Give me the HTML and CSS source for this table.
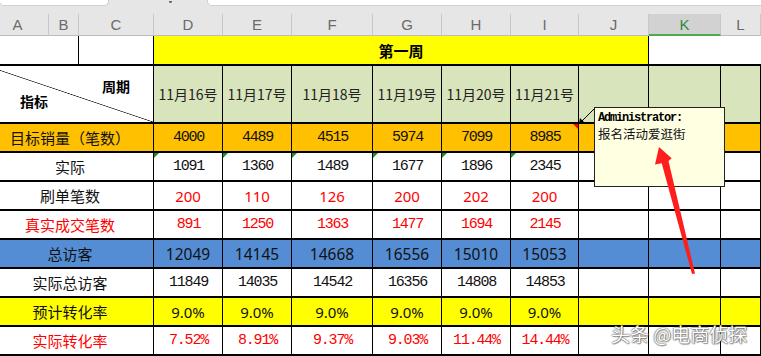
FILE: index.html
```html
<!DOCTYPE html>
<html lang="zh-CN">
<head>
<meta charset="utf-8">
<title>第一周</title>
<link rel="stylesheet" href="styles.css">
</head>
<body>
<div class="topbar">
  <div class="tb-box tb-left"></div>
  <span class="tb-mark"></span>
  <div class="tb-box tb-right"></div>
</div>
<div class="sheet">
  <div class="hd">A</div><div class="hd">B</div><div class="hd">C</div><div class="hd">D</div><div class="hd">E</div><div class="hd">F</div><div class="hd">G</div><div class="hd">H</div><div class="hd">I</div><div class="hd">J</div><div class="hd hd-sel">K</div><div class="hd">L</div>

  <div class="cell white span2"></div>
  <div class="cell white"></div>
  <div class="cell yellow span7 week">第一周</div>
  <div class="cell white span2 noright"></div>

  <div class="cell diag span3"><span class="d-top">周期</span><span class="d-bot">指标</span></div>
  <div class="cell green date">11月16号</div>
  <div class="cell green date">11月17号</div>
  <div class="cell green date">11月18号</div>
  <div class="cell green date">11月19号</div>
  <div class="cell green date">11月20号</div>
  <div class="cell green date">11月21号</div>
  <div class="cell green"></div><div class="cell green"></div><div class="cell green"></div>

  <div class="cell orange span3 label">目标销量（笔数）</div>
  <div class="cell orange mono">4000</div>
  <div class="cell orange mono">4489</div>
  <div class="cell orange mono">4515</div>
  <div class="cell orange mono">5974</div>
  <div class="cell orange mono">7099</div>
  <div class="cell orange mono has-note">8985</div>
  <div class="cell orange"></div><div class="cell orange"></div><div class="cell orange"></div>

  <div class="cell white span3 label">实际</div>
  <div class="cell white mono flag">1091</div>
  <div class="cell white mono flag">1360</div>
  <div class="cell white mono flag">1489</div>
  <div class="cell white mono flag">1677</div>
  <div class="cell white mono flag">1896</div>
  <div class="cell white mono flag">2345</div>
  <div class="cell white"></div><div class="cell white"></div><div class="cell white"></div>

  <div class="cell white span3 label">刷单笔数</div>
  <div class="cell white sans red">200</div>
  <div class="cell white sans red">110</div>
  <div class="cell white sans red">126</div>
  <div class="cell white sans red">200</div>
  <div class="cell white sans red">202</div>
  <div class="cell white sans red">200</div>
  <div class="cell white"></div><div class="cell white"></div><div class="cell white"></div>

  <div class="cell white span3 label red">真实成交笔数</div>
  <div class="cell white mono red">891</div>
  <div class="cell white mono red">1250</div>
  <div class="cell white mono red">1363</div>
  <div class="cell white mono red">1477</div>
  <div class="cell white mono red">1694</div>
  <div class="cell white mono red">2145</div>
  <div class="cell white"></div><div class="cell white"></div><div class="cell white"></div>

  <div class="cell blue span3 label">总访客</div>
  <div class="cell blue sans big">12049</div>
  <div class="cell blue sans big">14145</div>
  <div class="cell blue sans big">14668</div>
  <div class="cell blue sans big">16556</div>
  <div class="cell blue sans big">15010</div>
  <div class="cell blue sans big">15053</div>
  <div class="cell blue"></div><div class="cell blue"></div><div class="cell blue"></div>

  <div class="cell white span3 label">实际总访客</div>
  <div class="cell white mono">11849</div>
  <div class="cell white mono">14035</div>
  <div class="cell white mono">14542</div>
  <div class="cell white mono">16356</div>
  <div class="cell white mono">14808</div>
  <div class="cell white mono">14853</div>
  <div class="cell white"></div><div class="cell white"></div><div class="cell white"></div>

  <div class="cell yellow span3 label">预计转化率</div>
  <div class="cell yellow sans">9.0%</div>
  <div class="cell yellow sans">9.0%</div>
  <div class="cell yellow sans">9.0%</div>
  <div class="cell yellow sans">9.0%</div>
  <div class="cell yellow sans">9.0%</div>
  <div class="cell yellow sans">9.0%</div>
  <div class="cell yellow"></div><div class="cell yellow"></div><div class="cell yellow"></div>

  <div class="cell white span3 label red">实际转化率</div>
  <div class="cell white mono red">7.52%</div>
  <div class="cell white mono red">8.91%</div>
  <div class="cell white mono red">9.37%</div>
  <div class="cell white mono red">9.03%</div>
  <div class="cell white mono red">11.44%</div>
  <div class="cell white mono red">14.44%</div>
  <div class="cell white"></div><div class="cell white"></div><div class="cell white"></div>
</div>

<svg class="connector" width="22" height="22" viewBox="0 0 22 22">
  <line x1="6" y1="17" x2="20" y2="3" stroke="#000" stroke-width="1"/>
  <polygon points="4,19 5,13 10,18" fill="#000"/>
</svg>
<div class="comment">
  <div class="c-author">Administrator:</div>
  <div class="c-text">报名活动爱逛街</div>
</div>
<svg class="red-arrow" width="60" height="140" viewBox="0 0 60 140">
  <polygon points="19,7 31.7,18.3 28.5,21 55,133.5 52,134 21.7,23.3 15,24.5" fill="#ff1e1e"/>
</svg>
<div class="watermark">头条 @电商侦探</div>
</body>
</html>
```
FILE: styles.css
```css
html, body {
  margin: 0;
  padding: 0;
}
body {
  width: 761px;
  height: 356px;
  overflow: hidden;
  position: relative;
  background: #fff;
  font-family: "Noto Sans CJK SC", "Noto Sans", sans-serif;
}
.topbar {
  height: 14px;
  background: #e6e6e6;
  display: flex;
  align-items: flex-start;
  position: relative;
}
.tb-box {
  height: 6px;
  background: #fff;
  border: 1px solid #cfcfcf;
  border-top: none;
  border-radius: 0 0 5px 5px;
  box-sizing: border-box;
}
.tb-left {
  width: 110px;
  margin-left: -1px;
}
.tb-right {
  flex: 1;
  margin-left: 35px;
  margin-right: -6px;
}
.tb-mark {
  width: 3px;
  height: 2px;
  margin-left: 60px;
  margin-top: 1px;
  border-radius: 0 0 2px 2px;
  background: #666;
}
.sheet {
  margin-left: -13px;
  width: 774px;
  display: grid;
  grid-template-columns: 62px 30px 75px 69px 69px 81px 69px 69px 68px 70px 72px 40px;
  grid-template-rows: 22px 30px 58px repeat(8, 29px);
}
.hd {
  background: #e6e6e6;
  border-right: 1px solid #c8c8c8;
  border-bottom: 1px solid #bdbdbd;
  box-sizing: border-box;
  display: flex;
  align-items: center;
  justify-content: center;
  font: 15px "Liberation Sans", sans-serif;
  color: #6b6b6b;
}
.hd-sel {
  background: #d2d2d2;
  border-bottom: 2px solid #4caa50;
  color: #2f8a42;
}
.cell {
  box-sizing: border-box;
  border-right: 1px solid #000;
  border-bottom: 2px solid #000;
  display: flex;
  align-items: center;
  justify-content: center;
  position: relative;
  color: #111;
  font-size: 15px;
  white-space: nowrap;
}
.noright { border-right: none; }
.span2 { grid-column: span 2; }
.span3 { grid-column: span 3; }
.span7 { grid-column: span 7; }
.white { background: #fff; }
.yellow { background: #ffff00; }
.green { background: #d8e4bc; }
.orange { background: #ffc000; }
.blue { background: #548dd4; }
.red { color: #ff0000; }
.week {
  font-weight: bold;
  font-size: 15px;
  color: #000;
}
.date {
  font-size: 14px;
  color: #222;
}
.label {
  font-size: 15px;
}
.mono {
  font-family: "Liberation Mono", monospace;
  font-size: 15px;
  letter-spacing: -1.2px;
  padding-left: 1px;
}
.sans {
  font-family: "Noto Sans", sans-serif;
  font-size: 15px;
}
.big { color: #111; font-size: 15.5px; }
.diag {
  background: #fff linear-gradient(to top right, transparent calc(50% - 0.7px), #222 50%, transparent calc(50% + 0.7px));
  flex-direction: column;
  align-items: stretch;
  justify-content: flex-start;
  font-weight: bold;
  font-size: 14px;
  line-height: 16px;
  color: #000;
}
.d-top {
  align-self: flex-end;
  margin-top: 12px;
  margin-right: 23px;
}
.d-bot {
  align-self: flex-start;
  margin-top: -1px;
  margin-left: 33px;
}
.flag::before {
  content: "";
  position: absolute;
  left: 0;
  top: 0;
  border-top: 5px solid #1a8f2a;
  border-right: 5px solid transparent;
}
.has-note::after {
  content: "";
  position: absolute;
  right: 0;
  top: 0;
  border-top: 5px solid #ff0000;
  border-left: 5px solid transparent;
}
.connector {
  position: absolute;
  left: 575px;
  top: 105px;
}
.comment {
  position: absolute;
  left: 594px;
  top: 107px;
  width: 131px;
  height: 80px;
  box-sizing: border-box;
  background: #ffffe1;
  border: 1px solid #222;
  padding: 3px 3px;
}
.c-author {
  font: bold 12px/14px "Liberation Mono", monospace;
  letter-spacing: -1.2px;
  color: #000;
}
.c-text {
  font-size: 12.5px;
  line-height: 17px;
  color: #111;
}
.red-arrow {
  position: absolute;
  left: 640px;
  top: 140px;
}
.watermark {
  position: absolute;
  left: 611px;
  top: 321px;
  font-size: 19px;
  line-height: 26px;
  color: #fff;
  text-shadow: 0 0 1px #444, 0 0 2px #666, 1px 1px 1px rgba(0,0,0,0.35);
}
```
